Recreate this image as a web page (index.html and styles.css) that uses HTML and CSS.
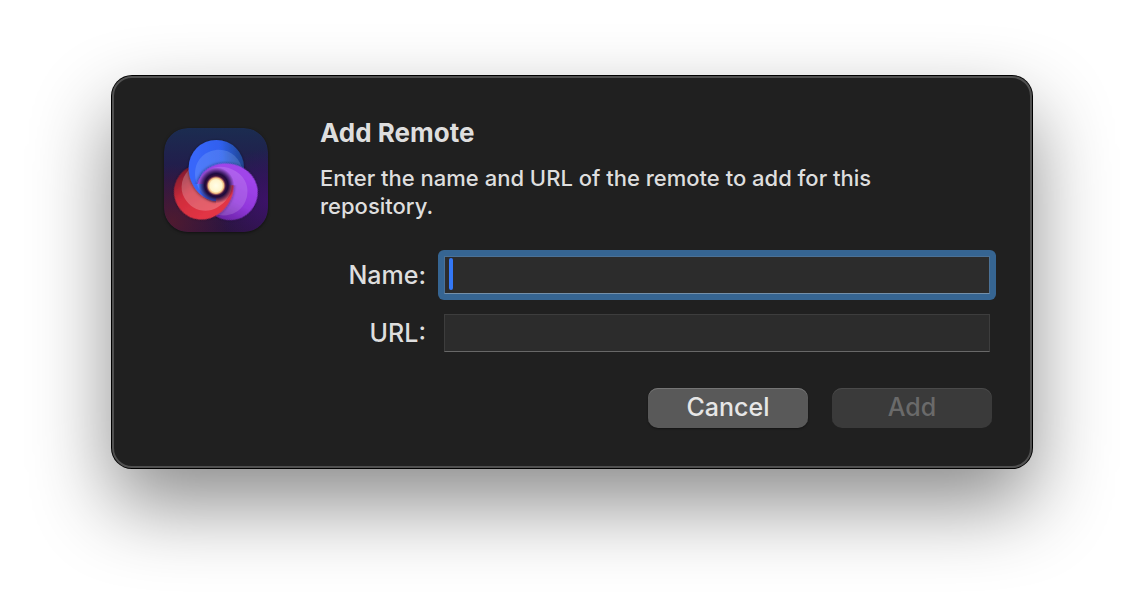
FILE: index.html
```
<!DOCTYPE html>
<html lang="en">
<head>
<meta charset="utf-8">
<meta name="viewport" content="width=device-width, initial-scale=1">
<title>Add Remote</title>
<link rel="stylesheet" href="styles.css">
</head>
<body>
<main class="dialog" role="dialog" aria-labelledby="dialog-title" aria-describedby="dialog-text">
  <svg class="app-icon" viewBox="24 24 312 312" aria-hidden="true">
    <defs>
      <linearGradient id="tile" x1="0" y1="0" x2="0" y2="1">
        <stop offset="0" stop-color="#1b2c50"/>
        <stop offset=".5" stop-color="#24184a"/>
        <stop offset="1" stop-color="#2b1440"/>
      </linearGradient>
      <radialGradient id="tile-red" cx=".08" cy=".9" r=".55">
        <stop offset="0" stop-color="#4e1a30"/>
        <stop offset="1" stop-color="#4e1a30" stop-opacity="0"/>
      </radialGradient>
      <radialGradient id="tile-purple" cx="1" cy=".7" r=".5">
        <stop offset="0" stop-color="#3c1268"/>
        <stop offset="1" stop-color="#3c1268" stop-opacity="0"/>
      </radialGradient>
      <linearGradient id="blue" gradientUnits="userSpaceOnUse" x1="120" y1="130" x2="262" y2="120">
        <stop offset="0" stop-color="#3866fa"/>
        <stop offset=".55" stop-color="#2f60ee"/>
        <stop offset="1" stop-color="#1f4690"/>
      </linearGradient>
      <linearGradient id="purple" gradientUnits="userSpaceOnUse" x1="120" y1="130" x2="262" y2="120">
        <stop offset="0" stop-color="#a044ea"/>
        <stop offset=".55" stop-color="#9238dc"/>
        <stop offset="1" stop-color="#6a24a4"/>
      </linearGradient>
      <linearGradient id="red" gradientUnits="userSpaceOnUse" x1="120" y1="130" x2="262" y2="120">
        <stop offset="0" stop-color="#e23444"/>
        <stop offset=".55" stop-color="#d02c3c"/>
        <stop offset="1" stop-color="#861c2e"/>
      </linearGradient>
      <radialGradient id="core">
        <stop offset="0" stop-color="#190830"/>
        <stop offset=".45" stop-color="#4a1440"/>
        <stop offset=".65" stop-color="#1d0a3c"/>
        <stop offset=".8" stop-color="#1d0a3c" stop-opacity=".6"/>
        <stop offset="1" stop-color="#1d0a3c" stop-opacity="0"/>
      </radialGradient>
      <radialGradient id="glow">
        <stop offset="0" stop-color="#fffde8"/>
        <stop offset=".6" stop-color="#fff5cc"/>
        <stop offset=".78" stop-color="#f2bd80"/>
        <stop offset="1" stop-color="#a04858" stop-opacity="0"/>
      </radialGradient>
      <filter id="soft" x="-20%" y="-20%" width="140%" height="140%">
        <feDropShadow dx="0" dy="2" stdDeviation="4" flood-color="#0a0620" flood-opacity=".55"/>
      </filter>
      <clipPath id="lower-right"><path d="M180 196H340V340H180Z"/></clipPath>
      <clipPath id="not-lower-left"><path d="M24 24H340V340H180V192H24Z"/></clipPath>
      <path id="blade" d="M264 143A83 83 0 0 0 98 143C98 198 138 243 185 243C230 243 264 200 264 143Z"/>
      <path id="blade-light" d="M262 158C254 114 224 89 190 89C150 89 117 118 117 160C117 205 145 238 183 242C228 242 262 204 262 158Z"/>
    </defs>
    <rect x="24" y="24" width="312" height="312" rx="72" fill="url(#tile)"/>
    <rect x="24" y="24" width="312" height="312" rx="72" fill="url(#tile-red)"/>
    <rect x="24" y="24" width="312" height="312" rx="72" fill="url(#tile-purple)"/>
    <g transform="rotate(240 180 192)">
      <use href="#blade" fill="url(#red)" filter="url(#soft)"/>
      <use href="#blade-light" fill="#fff" opacity=".22"/>
    </g>
    <use href="#blade" fill="url(#blue)" filter="url(#soft)"/>
    <use href="#blade-light" fill="#a8d0ff" opacity=".2"/>
    <g clip-path="url(#not-lower-left)">
      <g transform="rotate(120 180 192)">
        <use href="#blade" fill="url(#purple)" filter="url(#soft)"/>
        <use href="#blade-light" fill="#fff" opacity=".15"/>
      </g>
    </g>
    <g clip-path="url(#lower-right)">
      <g transform="rotate(240 180 192)">
        <use href="#blade" fill="url(#red)" filter="url(#soft)"/>
        <use href="#blade-light" fill="#fff" opacity=".22"/>
      </g>
    </g>
    <circle cx="181" cy="196" r="54" fill="url(#core)"/>
    <circle cx="180" cy="197" r="30" fill="url(#glow)"/>
  </svg>
  <form class="content">
    <h1 class="title" id="dialog-title">Add Remote</h1>
    <p class="message" id="dialog-text">Enter the name and URL of the remote to add for this repository.</p>
    <div class="fields">
      <label class="label" for="remote-name">Name:</label>
      <div class="field field-focused">
        <input class="input" id="remote-name" type="text" autocomplete="off">
        <span class="caret"></span>
      </div>
      <label class="label" for="remote-url">URL:</label>
      <div class="field">
        <input class="input" id="remote-url" type="text" autocomplete="off">
      </div>
    </div>
    <div class="actions">
      <button class="button" type="button">Cancel</button>
      <button class="button" type="submit" disabled>Add</button>
    </div>
  </form>
</main>
</body>
</html>
```
FILE: styles.css
```
* {
  box-sizing: border-box;
}

body {
  min-height: 100vh;
  margin: 0;
  padding: 76px 112px;
  background: #fff;
  color: #dedede;
  font-family: Inter, "Liberation Sans", sans-serif;
  font-weight: 500;
}

.dialog {
  display: flex;
  align-items: flex-start;
  gap: 52px;
  padding: 38px 38px 38px 50px;
  border: 2px solid #505050;
  border-radius: 20px;
  background: #202020;
  box-shadow: 0 0 0 1px #000, 0 36px 80px rgba(0, 0, 0, .46);
}

.app-icon {
  flex: none;
  width: 104px;
  height: 104px;
  margin-top: 12px;
  border-radius: 24px;
  box-shadow: 0 1px 3px rgba(0, 0, 0, .5);
}

.content {
  flex: 1;
  min-width: 0;
}

.title {
  margin: 0;
  font-size: 26px;
  font-weight: 700;
  line-height: 34px;
}

.message {
  margin: 14px 0 0;
  padding-right: 80px;
  font-size: 22px;
  line-height: 28px;
}

.fields {
  display: grid;
  grid-template-columns: 106px 1fr;
  align-items: center;
  gap: 20px 18px;
  margin: 36px 2px 0 0;
}

.label {
  font-size: 25px;
  line-height: 38px;
  text-align: right;
}

.input {
  display: block;
  width: 100%;
  height: 38px;
  padding: 0 6px;
  border: 1px solid #3d3d3d;
  border-bottom: 1px solid #686868;
  border-radius: 0;
  outline: none;
  background: #2c2c2c;
  color: inherit;
  font: inherit;
  font-size: 25px;
}

.field-focused {
  position: relative;
  margin: -6px;
  padding: 6px;
  border-radius: 6px;
  background: #366592;
}

.field-focused .input {
  border-color: #4b7196;
  border-bottom-color: #7490aa;
}

.caret {
  position: absolute;
  top: 8px;
  left: 11px;
  width: 4px;
  height: 32px;
  border-radius: 2px;
  background: #3478f6;
}

.actions {
  display: flex;
  justify-content: flex-end;
  gap: 24px;
  margin-top: 36px;
}

.button {
  width: 160px;
  height: 40px;
  padding: 0 0 2px;
  border: 0;
  border-radius: 10px;
  background: #595959;
  box-shadow: inset 0 1px #757575, 0 1px 2px rgba(0, 0, 0, .4);
  color: #e6e6e6;
  font: inherit;
  font-size: 25px;
}

.button:disabled {
  background: #3a3a3a;
  box-shadow: inset 0 1px #4a4a4a;
  color: #6a6a6a;
}
```
